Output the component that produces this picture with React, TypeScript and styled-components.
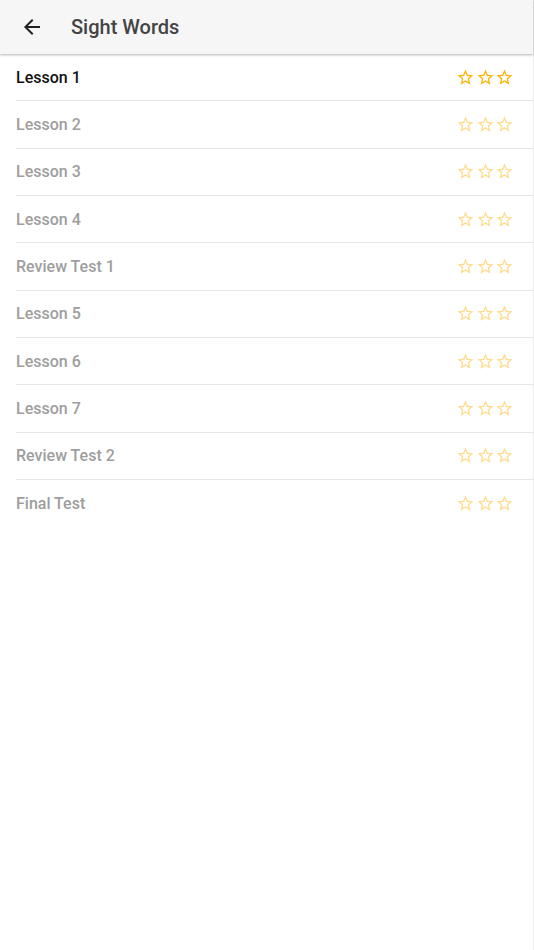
import styled, { createGlobalStyle } from "styled-components";

const GlobalStyle = createGlobalStyle`
    html, body {
        margin: 0;
        padding: 0;
        background: #ffffff;
        font-family: Roboto, "Noto Sans", sans-serif;
    }
`

const Screen = styled.div`
    width: 534px;
    min-height: 950px;
    box-sizing: border-box;
    border-right: 1px solid #ececec;
    background: #ffffff;
`

const TopBar = styled.header`
    height: 54px;
    display: flex;
    align-items: center;
    background-color: #f6f6f6;
    box-shadow: 0 1px 2px rgba(0, 0, 0, 0.22), 0 2px 3px rgba(0, 0, 0, 0.06);
    position: relative;
    z-index: 1;
`

const BackButton = styled.button`
    width: 24px;
    height: 24px;
    margin-left: 20px;
    padding: 0;
    border: none;
    background: none;
    display: flex;
    color: #212121;
`

const Title = styled.h1`
    margin: 0 0 0 27px;
    font-size: 20px;
    font-weight: 500;
    color: #444444;
    letter-spacing: 0;
`

const List = styled.ul`
    list-style: none;
    margin: 0;
    padding: 0 0 0 16px;
`

const Row = styled.li<{ $last?: boolean }>`
    height: 46.33px;
    display: flex;
    align-items: center;
    justify-content: space-between;
    padding-right: 19px;
    border-bottom: ${({ $last }) => ($last ? "none" : "1px solid #e6e6e6")};
`

const Label = styled.span<{ $active?: boolean }>`
    font-size: 16px;
    font-weight: 500;
    color: ${({ $active }) => ($active ? "#111111" : "#9e9e9e")};
`

const Stars = styled.div<{ $active?: boolean }>`
    display: flex;
    gap: 0.5px;
    color: #ffb300;
    opacity: ${({ $active }) => ($active ? 1 : 0.45)};
`

const StarBorder = () => (
    <svg width="19" height="19" viewBox="0 0 24 24" fill="currentColor">
        <path d="M22 9.24l-7.19-.62L12 2 9.19 8.63 2 9.24l5.46 4.73L5.82 21 12 17.27 18.18 21l-1.630-7.03L22 9.24zM12 15.4l-3.76 2.27 1-4.28-3.32-2.88 4.38-.38L12 6.1l1.71 4.04 4.38.38-3.32 2.88 1 4.28L12 15.4z" />
    </svg>
)

const lessons = [
    "Lesson 1",
    "Lesson 2",
    "Lesson 3",
    "Lesson 4",
    "Review Test 1",
    "Lesson 5",
    "Lesson 6",
    "Lesson 7",
    "Review Test 2",
    "Final Test",
]

const App = () => {
    return (
        <Screen>
            <GlobalStyle />
            <TopBar>
                <BackButton aria-label="back">
                    <svg width="24" height="24" viewBox="0 0 24 24" fill="currentColor">
                        <path d="M20 11H7.83l5.59-5.59L12 4 4 12l8 8 1.41-1.41L7.83 13H20v-2z" />
                    </svg>
                </BackButton>
                <Title>Sight Words</Title>
            </TopBar>
            <List>
                {lessons.map((name, i) => (
                    <Row key={name} $last={i === lessons.length - 1}>
                        <Label $active={i === 0}>{name}</Label>
                        <Stars $active={i === 0}>
                            <StarBorder />
                            <StarBorder />
                            <StarBorder />
                        </Stars>
                    </Row>
                ))}
            </List>
        </Screen>
    )
};

export default App;
